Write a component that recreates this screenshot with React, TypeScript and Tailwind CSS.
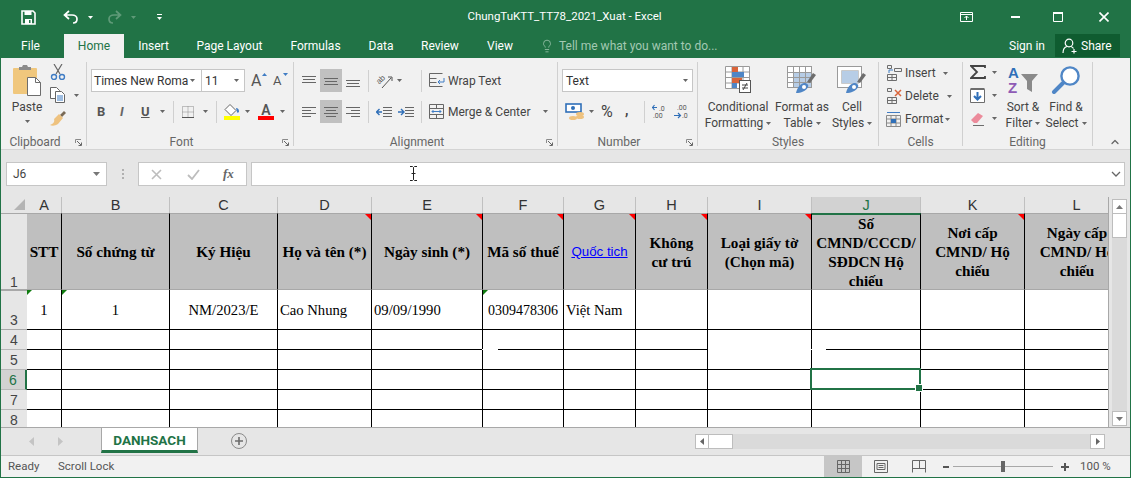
import type { ReactNode } from "react";
import { ChevronUp, Lightbulb } from "lucide-react";

const columns = [
  { name: "A", head: ["STT"] },
  { name: "B", head: ["Số chứng từ"] },
  { name: "C", head: ["Ký Hiệu"] },
  { name: "D", head: ["Họ và tên (*)"], note: true },
  { name: "E", head: ["Ngày sinh (*)"], note: true },
  { name: "F", head: ["Mã số thuế"], note: true },
  { name: "G", head: ["Quốc tich"], note: true, link: true },
  { name: "H", head: ["Không", "cư trú"], note: true },
  { name: "I", head: ["Loại giấy tờ", "(Chọn mã)"], note: true },
  { name: "J", head: ["Số", "CMND/CCCD/", "SĐDCN Hộ", "chiếu"] },
  { name: "K", head: ["Nơi cấp", "CMND/ Hộ", "chiếu"], note: true },
  { name: "L", head: ["Ngày cấp", "CMND/ Hộ", "chiếu"] },
];

const dataRow = [
  { text: "1", className: "justify-center", flag: true },
  { text: "1", className: "justify-center", flag: true },
  { text: "NM/2023/E", className: "justify-center" },
  { text: "Cao Nhung", className: "pl-[2px]" },
  { text: "09/09/1990", className: "pl-[2px]" },
  { text: "0309478306", className: "pl-[5px] pt-[2px] text-[14px]", flag: true },
  { text: "Việt Nam", className: "pl-[2px]" },
  { text: "" },
  { text: "" },
  { text: "" },
  { text: "" },
  { text: "" },
];

function Caret({ className = "" }: { className?: string }) {
  return (
    <svg width="5" height="3" viewBox="0 0 5 3" className={`shrink-0 ${className}`}>
      <path d="M0 0h5L2.5 3z" fill="#666" />
    </svg>
  );
}

function Launcher() {
  return (
    <svg width="7" height="7" viewBox="0 0 7 7" className="absolute right-[4px] top-[5px]">
      <path d="M.5 4V.5H6" fill="none" stroke="#8a8a8a" />
      <path d="M2 2l4 4M3.5 6.5h3v-3" fill="none" stroke="#666" />
    </svg>
  );
}

function Sep({ className = "" }: { className?: string }) {
  return <div className={`h-[22px] w-px shrink-0 bg-[#d0d0d0] ${className}`} />;
}

function Lines({ rows }: { rows: [number, number, number][] }) {
  return (
    <svg width="14" height="14" viewBox="0 0 14 14" className="shrink-0">
      {rows.map(([a, b, y]) => (
        <path key={`${a}-${y}`} d={`M${a} ${y + 0.5}H${b}`} stroke="#666" />
      ))}
    </svg>
  );
}

function Group({ width, label, launcher, children }: { width: string; label: string; launcher?: boolean; children: ReactNode }) {
  return (
    <div className={`${width} h-[84px] shrink-0 border-r border-[#d0d0d0] flex flex-col`}>
      <div className="h-[72px] relative">{children}</div>
      <div className={`relative h-[12px] text-center leading-[16px] text-[#666] ${launcher ? "pr-[17px]" : ""}`}>
        {label}
        {launcher && <Launcher />}
      </div>
    </div>
  );
}

function BrushCell({ tint }: { tint: "table" | "cell" }) {
  return (
    <svg width="30" height="28" viewBox="0 0 30 28">
      <rect x=".5" y=".5" width="24" height="21" fill="#fff" stroke="#9a9a9a" />
      {tint === "table" ? (
        <>
          <rect x="7" y="7" width="17" height="14" fill="#b7cde6" />
          <path d="M.5 6.5h24M.5 11.5h24M.5 16.5h24M6.5 1v20M12.5 1v20M18.5 1v20" stroke="#9a9a9a" />
        </>
      ) : (
        <>
          <rect x="5" y="5" width="16" height="12" fill="#b7cde6" />
          <path d="M4.5 4.5h17v13h-17z" fill="none" stroke="#c9c9c9" />
        </>
      )}
      <path d="M20 16l6-9 3 2-6 8z" fill="#6d6d6d" />
      <path d="M9 27c1-5 4-9 8-10 3 0 5 2 4 4-2 4-7 6-12 6z" fill="#4f86c6" />
      <circle cx="17" cy="21" r="2" fill="#fff" />
    </svg>
  );
}

function SmallGrid({ children }: { children?: ReactNode }) {
  return (
    <svg width="17" height="16" viewBox="0 0 17 16" className="shrink-0">
      <path d="M1.5 9.5h9v6h-9zM6 9.5v6M1.5 12.5h9" fill="none" stroke="#6d6d6d" />
      {children}
    </svg>
  );
}

function Ribbon() {
  return (
    <div className="h-[92px] pt-[4px] flex bg-[#f1f1f1] text-[12px] text-[#444] border-b border-[#d4d4d4]">
      <Group width="w-[86px]" label="Clipboard" launcher>
        <div className="flex">
          <div className="ml-[3px] w-[46px] flex flex-col items-center">
            <svg width="28" height="31" viewBox="0 0 28 31" className="mt-[3px]">
              <rect x="0" y="3" width="24" height="26" rx="1" fill="#f0c77d" />
              <path d="M6 5V2h3l1-2h4l1 2h3v3z" fill="#8b8b8b" />
              <path d="M14.5 12.5h8l5 5v13h-13z" fill="#fff" stroke="#6d6d6d" />
              <path d="M22.5 12.5v5h5" fill="none" stroke="#6d6d6d" />
            </svg>
            <div className="mt-[3px] leading-[16px]">Paste</div>
            <Caret className="mt-[5px]" />
          </div>
          <div className="mt-[2px] flex flex-col gap-[7px]">
            <svg width="16" height="16" viewBox="0 0 16 16">
              <path d="M4 0l6 10M12 0L6 10" stroke="#666" strokeWidth="1.2" />
              <circle cx="4" cy="13" r="2.5" fill="none" stroke="#3f7cc4" strokeWidth="1.4" />
              <circle cx="12" cy="13" r="2.5" fill="none" stroke="#3f7cc4" strokeWidth="1.4" />
            </svg>
            <div className="h-[16px] flex items-center">
              <svg width="16" height="16" viewBox="0 0 16 16">
                <path d="M.5.5h6l3 3v8h-9z" fill="#fff" stroke="#666" />
                <path d="M5.5 4.5h6l3 3v8h-9z" fill="#fff" stroke="#666" />
                <path d="M7 9h6M7 11h6M7 13h6" stroke="#3f7cc4" />
              </svg>
              <Caret className="ml-[8px]" />
            </div>
            <svg width="17" height="16" viewBox="0 0 17 16">
              <path d="M10 5l4-4 2 2-4 4z" fill="#7a6a55" />
              <path d="M9 4l4 4-5 6c-3 2-6 2-8 1 3-1 5-3 4-6z" fill="#eec27f" />
            </svg>
          </div>
        </div>
      </Group>

      <Group width="w-[207px]" label="Font" launcher>
        <div className="ml-[4px] mt-[7px] h-[23px] flex">
          <div className="w-[111px] bg-white border border-[#c6c6c6] flex items-center pl-[2px] pr-[4px]">
            <span className="w-[93px] whitespace-nowrap text-[#333]">Times New Roma</span>
            <Caret className="ml-[3px]" />
          </div>
          <div className="w-[43px] bg-white border border-[#c6c6c6] border-l-0 flex items-center pl-[3px] text-[#333]">
            <span className="w-[29px]">11</span>
            <Caret />
          </div>
          <div className="ml-[6px] w-[14px] relative text-[16px] leading-[23px] text-[#555]">
            A
            <svg width="5" height="3" viewBox="0 0 5 3" className="absolute right-[-2px] top-[4px]"><path d="M0 3h5L2.5 0z" fill="#3f7cc4" /></svg>
          </div>
          <div className="ml-[8px] w-[14px] relative text-[13px] leading-[24px] text-[#555]">
            A
            <svg width="5" height="3" viewBox="0 0 5 3" className="absolute right-[-1px] top-[4px]"><path d="M0 0h5L2.5 3z" fill="#3f7cc4" /></svg>
          </div>
        </div>
        <div className="mt-[8px] h-[23px] flex items-center text-[#555]">
          <span className="ml-[10px] w-[9px] font-bold text-[13px]">B</span>
          <span className="ml-[14px] w-[8px] italic font-bold text-[13px] text-[#666]">I</span>
          <span className="ml-[13px] w-[9px] underline font-bold text-[13px]">U</span>
          <Caret className="ml-[10px]" />
          <Sep className="ml-[8px]" />
          <svg width="12" height="12" viewBox="0 0 12 12" className="ml-[8px] shrink-0">
            <path d="M.5.5h11v11H.5zM6 .5v11M.5 6h11" fill="none" stroke="#8a8a8a" strokeDasharray="1 1" />
            <path d="M0 11.5h12" stroke="#555" />
          </svg>
          <Caret className="ml-[9px]" />
          <Sep className="ml-[8px]" />
          <div className="ml-[7px] w-[16px] shrink-0 flex flex-col items-center">
            <svg width="16" height="12" viewBox="0 0 16 12">
              <path d="M6 .5l6 6-5 5-6-6z" fill="#fff" stroke="#666" />
              <path d="M12 4c2 0 3 1 3 4-1 1-2 1-2 0z" fill="#3f7cc4" />
            </svg>
            <div className="h-[4px] w-[16px] bg-[#ffff00]" />
          </div>
          <Caret className="ml-[5px]" />
          <div className="ml-[8px] w-[16px] shrink-0 flex flex-col items-center">
            <span className="h-[12px] leading-[13px] text-[14px] font-semibold text-[#555]">A</span>
            <div className="h-[4px] w-[16px] bg-[#ff0000]" />
          </div>
          <Caret className="ml-[6px]" />
        </div>
      </Group>

      <Group width="w-[264px]" label="Alignment" launcher>
        <div className="mt-[7px] h-[23px] flex items-center">
          <div className="ml-[8px]"><Lines rows={[[0, 14, 2], [1, 13, 5], [0, 14, 8]]} /></div>
          <div className="ml-[4px] w-[22px] h-[23px] bg-[#c0c0c0] flex items-center justify-center"><Lines rows={[[0, 14, 4], [1, 13, 7], [0, 14, 10]]} /></div>
          <div className="ml-[4px]"><Lines rows={[[0, 14, 6], [1, 13, 9], [0, 14, 12]]} /></div>
          <Sep className="ml-[8px]" />
          <svg width="16" height="16" viewBox="0 0 16 16" className="ml-[7px] shrink-0 overflow-visible">
            <text x="1" y="10" fontSize="8" fill="#555" transform="rotate(-45 4 8)" fontFamily="Liberation Sans">ab</text>
            <path d="M6 15L15 5M12 4h4v4" fill="none" stroke="#555" />
          </svg>
          <Caret className="ml-[5px]" />
          <Sep className="ml-[19px]" />
          <svg width="16" height="15" viewBox="0 0 16 15" className="ml-[7px] shrink-0">
            <path d="M.5.5h13M.5 5.5h7M.5 9.5h7M.5 13.5h13M.5.5v13" fill="none" stroke="#666" />
            <path d="M15 5v4H9M11 7L9 9l2 2" fill="none" stroke="#3f7cc4" />
          </svg>
          <span className="ml-[3px]">Wrap Text</span>
        </div>
        <div className="mt-[8px] h-[23px] flex items-center">
          <div className="ml-[8px]"><Lines rows={[[0, 14, 2], [0, 9, 5], [0, 14, 8], [0, 9, 11]]} /></div>
          <div className="ml-[4px] w-[22px] h-[23px] bg-[#c0c0c0] flex items-center justify-center"><Lines rows={[[0, 14, 2], [2, 12, 5], [0, 14, 8], [2, 12, 11]]} /></div>
          <div className="ml-[4px]"><Lines rows={[[0, 14, 2], [5, 14, 5], [0, 14, 8], [5, 14, 11]]} /></div>
          <Sep className="ml-[8px]" />
          <svg width="16" height="12" viewBox="0 0 16 12" className="ml-[7px] shrink-0">
            <path d="M7 1.5h9M7 4.5h9M7 7.5h9M7 10.5h9" stroke="#666" />
            <path d="M6 6H1M3.5 3L.5 6l3 3" fill="none" stroke="#2f6fb8" strokeWidth="1.4" />
          </svg>
          <svg width="16" height="12" viewBox="0 0 16 12" className="ml-[6px] shrink-0">
            <path d="M7 1.5h9M7 4.5h9M7 7.5h9M7 10.5h9" stroke="#666" />
            <path d="M0 6h5M3 3l3 3-3 3" fill="none" stroke="#2f6fb8" strokeWidth="1.4" />
          </svg>
          <Sep className="ml-[7px]" />
          <svg width="16" height="15" viewBox="0 0 16 15" className="ml-[7px] shrink-0">
            <path d="M.5.5h14v14H.5zM.5 4.5h14M.5 10.5h14M7.5.5v4M7.5 10.5v4" fill="none" stroke="#666" />
            <path d="M3 7.5h9M4.5 6L3 7.5 4.5 9M10.5 6L12 7.5 10.5 9" fill="none" stroke="#3f7cc4" />
          </svg>
          <span className="ml-[3px] w-[86px] shrink-0 whitespace-nowrap">Merge &amp; Center</span>
          <Caret className="ml-[9px]" />
        </div>
      </Group>

      <Group width="w-[140px]" label="Number" launcher>
        <div className="ml-[4px] mt-[7px] w-[131px] h-[23px] bg-white border border-[#c6c6c6] flex items-center justify-between pl-[3px] pr-[4px] text-[#333]">
          <span>Text</span>
          <Caret />
        </div>
        <div className="mt-[8px] h-[23px] flex items-center">
          <svg width="20" height="18" viewBox="0 0 20 18" className="ml-[7px] shrink-0">
            <rect x="1" y="1" width="15" height="8" fill="#fff" stroke="#2f6fb8" strokeWidth="1.6" />
            <circle cx="8" cy="5" r="2" fill="#2f6fb8" />
            <ellipse cx="15" cy="11" rx="4" ry="2" fill="#eec27f" />
            <ellipse cx="15" cy="14" rx="4" ry="2" fill="#eec27f" />
            <ellipse cx="8" cy="15" rx="4" ry="2" fill="#eec27f" />
          </svg>
          <Caret className="ml-[4px]" />
          <span className="ml-[7px] w-[13px] text-[16px] leading-none">%</span>
          <span className="ml-[11px] w-[5px] font-bold text-[14px] leading-[10px] pb-[4px]">,</span>
          <Sep className="ml-[14px]" />
          <svg width="14" height="15" viewBox="0 0 14 15" className="ml-[7px] shrink-0">
            <path d="M5 3.5H0M2.5 1L.5 3.5 2.5 6" fill="none" stroke="#2f6fb8" strokeWidth="1.2" />
            <text x="7" y="7" fontSize="7" fill="#555">.0</text>
            <text x="1" y="14" fontSize="7" fill="#555">.00</text>
          </svg>
          <svg width="14" height="15" viewBox="0 0 14 15" className="ml-[8px] shrink-0">
            <text x="3" y="6" fontSize="7" fill="#555">.00</text>
            <path d="M0 11.5h6M4 9l2.5 2.5L4 14" fill="none" stroke="#2f6fb8" strokeWidth="1.2" />
            <text x="8" y="14" fontSize="7" fill="#555">.0</text>
          </svg>
        </div>
      </Group>

      <Group width="w-[181px]" label="Styles">
        <div className="flex leading-[16px]">
          <div className="ml-[5px] w-[70px] flex flex-col items-center whitespace-nowrap">
            <svg width="26" height="27" viewBox="0 0 26 27" className="mt-[4px]">
              <path d="M.5.5h24v22H.5zM.5 6h24M.5 11.5h24M.5 17h24M7 .5v22M18 .5v22" fill="#fff" stroke="#9a9a9a" />
              <rect x="7" y="1" width="6" height="5" fill="#d9643a" />
              <rect x="7" y="6" width="12" height="5" fill="#4f86c6" />
              <rect x="7" y="12" width="10" height="5" fill="#d9643a" />
              <rect x="7" y="17" width="5" height="5" fill="#4f86c6" />
              <rect x="14.5" y="14.5" width="11" height="12" fill="#fff" stroke="#555" />
              <path d="M17 19h6M17 22h6M22 17l-4 7" stroke="#444" />
            </svg>
            <div className="mt-[6px]">Conditional</div>
            <div className="flex items-center">Formatting<Caret className="ml-[3px]" /></div>
          </div>
          <div className="ml-[1px] w-[56px] flex flex-col items-center whitespace-nowrap">
            <div className="mt-[4px] h-[27px]"><BrushCell tint="table" /></div>
            <div className="mt-[6px]">Format as</div>
            <div className="flex items-center">Table<Caret className="ml-[3px]" /></div>
          </div>
          <div className="ml-[2px] w-[40px] flex flex-col items-center whitespace-nowrap">
            <div className="mt-[4px] h-[27px]"><BrushCell tint="cell" /></div>
            <div className="mt-[6px]">Cell</div>
            <div className="flex items-center">Styles<Caret className="ml-[3px]" /></div>
          </div>
        </div>
      </Group>

      <Group width="w-[84px]" label="Cells">
        <div className="mt-[3px] flex flex-col gap-[7px]">
          <div className="h-[16px] flex items-center">
            <div className="ml-[7px]">
              <SmallGrid>
                <path d="M1.5.5h4v3h-4zM8.5 3.5h7v3h-7z" fill="none" stroke="#6d6d6d" />
                <path d="M7 5H3v3" fill="none" stroke="#3f7cc4" />
              </SmallGrid>
            </div>
            <span className="ml-[2px] w-[38px]">Insert</span>
            <Caret />
          </div>
          <div className="h-[16px] flex items-center">
            <div className="ml-[7px]">
              <SmallGrid>
                <path d="M1.5.5h4v3h-4z" fill="none" stroke="#6d6d6d" />
                <path d="M9 2l6 6M15 2L9 8" stroke="#d9643a" strokeWidth="1.5" />
              </SmallGrid>
            </div>
            <span className="ml-[2px] w-[42px]">Delete</span>
            <Caret />
          </div>
          <div className="h-[16px] flex items-center">
            <svg width="15" height="16" viewBox="0 0 15 16" className="ml-[7px] shrink-0">
              <path d="M.5 4.5h14v11H.5zM.5 8h14M.5 12h14M5 4.5v11M10 4.5v11" fill="none" stroke="#8a8a8a" />
              <rect x="5" y="8" width="5" height="4" fill="#2f6fb8" />
              <path d="M1 1.5h13" stroke="#3f7cc4" />
            </svg>
            <span className="ml-[4px] w-[40px]">Format</span>
            <Caret />
          </div>
        </div>
      </Group>

      <Group width="w-[130px]" label="Editing">
        <div className="flex">
          <div className="mt-[2px] flex flex-col gap-[7px]">
            <div className="h-[16px] flex items-center">
              <svg width="16" height="14" viewBox="0 0 16 14" className="ml-[7px] shrink-0">
                <path d="M15 3V1H1l6 6-6 6h14v-2" fill="none" stroke="#444" strokeWidth="1.8" />
              </svg>
              <Caret className="ml-[6px]" />
            </div>
            <div className="h-[16px] flex items-center">
              <svg width="15" height="16" viewBox="0 0 15 16" className="ml-[7px] shrink-0">
                <path d="M.5 2.5h14v13H.5z" fill="#fff" stroke="#6d6d6d" />
                <path d="M.5 1h14v2H.5z" fill="#6d6d6d" />
                <path d="M7.5 5v7M4 9l3.5 3.5L11 9" fill="none" stroke="#2f6fb8" strokeWidth="2" />
              </svg>
              <Caret className="ml-[7px]" />
            </div>
            <div className="h-[16px] flex items-center">
              <svg width="15" height="15" viewBox="0 0 15 15" className="ml-[7px] shrink-0">
                <path d="M1 9l7-7 5 3-6 7H4z" fill="#ec8b9b" />
                <path d="M3 14.5h11" stroke="#6d6d6d" />
              </svg>
              <Caret className="ml-[7px]" />
            </div>
          </div>
          <div className="ml-[6px] w-[40px] flex flex-col items-center whitespace-nowrap leading-[16px]">
            <svg width="31" height="28" viewBox="0 0 31 28" className="mt-[4px] overflow-visible">
              <text x="0" y="12" fontSize="15" fontWeight="700" fill="#2f6fb8" fontFamily="Liberation Sans">A</text>
              <text x="0" y="27" fontSize="15" fontWeight="700" fill="#8f5bb5" fontFamily="Liberation Sans">Z</text>
              <path d="M13 8h17l-6 7v11l-5-3v-8z" fill="#8a8a8a" />
            </svg>
            <div className="mt-[5px]">Sort &amp;</div>
            <div className="flex items-center">Filter<Caret className="ml-[3px]" /></div>
          </div>
          <div className="ml-[3px] w-[40px] flex flex-col items-center whitespace-nowrap leading-[16px]">
            <svg width="30" height="28" viewBox="0 0 30 28" className="mt-[4px]">
              <circle cx="19" cy="10" r="8.6" fill="#fff" stroke="#4f86c6" strokeWidth="2.4" />
              <path d="M12 17l-9 9" stroke="#4f86c6" strokeWidth="4" strokeLinecap="round" />
            </svg>
            <div className="mt-[5px]">Find &amp;</div>
            <div className="flex items-center">Select<Caret className="ml-[3px]" /></div>
          </div>
        </div>
      </Group>

      <ChevronUp size={12} strokeWidth={2.5} color="#666" className="self-end ml-[16px] mb-[1px]" />
    </div>
  );
}

function FormulaBar() {
  return (
    <div className="h-[47px] pt-[12px] flex bg-[#e6e6e6] text-[12px] text-[#444]">
      <div className="ml-[5px] w-[101px] h-[24px] bg-white border border-[#c6c6c6] flex items-center justify-between pl-[6px] pr-[6px]">
        <span>J6</span>
        <svg width="7" height="4" viewBox="0 0 7 4"><path d="M0 0h7L3.5 4z" fill="#777" /></svg>
      </div>
      <div className="ml-[15px] h-[24px] flex flex-col justify-center gap-[2px]">
        <div className="w-[2px] h-[2px] bg-[#b0b0b0]" />
        <div className="w-[2px] h-[2px] bg-[#b0b0b0]" />
        <div className="w-[2px] h-[2px] bg-[#b0b0b0]" />
      </div>
      <div className="ml-[14px] w-[109px] h-[24px] bg-white border border-[#c6c6c6] flex items-center">
        <svg width="11" height="11" viewBox="0 0 11 11" className="ml-[12px]"><path d="M1 1l9 9M10 1l-9 9" stroke="#bdbdbd" strokeWidth="1.6" /></svg>
        <svg width="13" height="11" viewBox="0 0 13 11" className="ml-[25px]"><path d="M1 6l4 4 7-9" fill="none" stroke="#bdbdbd" strokeWidth="1.8" /></svg>
        <span className="ml-[23px] font-['Liberation_Serif',serif] italic font-bold text-[13px] text-[#666]">fx</span>
      </div>
      <div className="relative ml-[4px] flex-1 mr-[5px] h-[24px] bg-white border border-[#c6c6c6] flex items-center justify-end pr-[3px]">
        <svg width="10" height="6" viewBox="0 0 10 6"><path d="M1 1l4 4 4-4" fill="none" stroke="#666" strokeWidth="1.3" /></svg>
        <svg width="7" height="15" viewBox="0 0 7 15" className="absolute left-[158px] top-[3px]">
          <path d="M0 .5h2.5l1 1 1-1H7M0 14.5h2.5l1-1 1 1H7M3.5 1.5v12M1.5 7.5h4" fill="none" stroke="#222" />
        </svg>
      </div>
    </div>
  );
}

function Sheet() {
  return (
    <div className="h-[230px] flex bg-[#e6e6e6]">
      <div className="w-[1108px] shrink-0 overflow-hidden border-r border-[#a8a8a8]">
        <div className="w-[1228px] grid grid-cols-[26px_35px_108px_108px_94px_111px_81px_72px_72px_104px_109px_104px_104px] grid-rows-[16px_77px_40px_repeat(5,20px)] font-['Liberation_Serif',serif] text-[14.67px] text-black">
          <div className="bg-[#e6e6e6] flex items-end justify-end pr-[2px] pb-[3px]">
            <svg width="11" height="11" viewBox="0 0 11 11"><path d="M11 0v11H0z" fill="#b4b4b4" /></svg>
          </div>
          {columns.map((c) => (
            <div
              key={c.name}
              className={`border-r border-[#c0c0c0] flex items-center justify-center font-['Liberation_Sans',sans-serif] text-[14.5px] leading-none ${c.name === "J" ? "bg-[#d2d2d2] text-[#217346]" : "bg-[#e6e6e6] text-[#333]"}`}
            >
              {c.name}
            </div>
          ))}

          <div className="bg-[#e6e6e6] border-y border-[#a8a8a8] flex items-end justify-center leading-none font-['Liberation_Sans',sans-serif] text-[14px] text-[#444]">1</div>
          {columns.map((c) => (
            <div
              key={c.name}
              className={`relative bg-[#bfbfbf] border-r border-r-black border-b border-b-[#a8a8a8] flex flex-col items-center justify-center whitespace-nowrap leading-[19px] ${c.name === "J" ? "border-t-2 border-t-[#217346]" : "border-t border-t-[#a8a8a8]"} ${c.name === "L" ? "border-r-0" : ""}`}
            >
              {c.link ? (
                <span className="font-['Liberation_Sans',sans-serif] text-[13.3px] font-normal text-[#0000ff] underline">{c.head[0]}</span>
              ) : (
                c.head.map((line) => <span key={line} className="font-bold text-[15.2px]">{line}</span>)
              )}
              {c.note && <div className="absolute right-0 top-0 w-[6px] h-[6px] bg-[#ff0000] [clip-path:polygon(0_0,100%_0,100%_100%)]" />}
            </div>
          ))}

          <div className="bg-[#e6e6e6] border-y border-[#a8a8a8] flex items-end justify-center leading-none pb-[2px] font-['Liberation_Sans',sans-serif] text-[14px] text-[#444]">3</div>
          {dataRow.map((d, i) => (
            <div key={i} className={`relative bg-white border-r border-b border-black flex items-center whitespace-nowrap ${d.className ?? ""}`}>
              {d.text}
              {d.flag && <div className="absolute left-0 top-0 w-[5px] h-[5px] bg-[#107c10] [clip-path:polygon(0_0,100%_0,0_100%)]" />}
            </div>
          ))}

          {[4, 5, 6, 7, 8].map((row) => (
            <Row key={row} row={row} />
          ))}
        </div>
      </div>
      <div className="w-[21px] pl-[3px] pt-[2px] flex flex-col">
        <div className="w-[15px] h-[15px] bg-white border border-[#bdbdbd] flex items-center justify-center">
          <svg width="7" height="4" viewBox="0 0 7 4"><path d="M0 4h7L3.5 0z" fill="#777" /></svg>
        </div>
        <div className="w-[15px] flex-1 bg-[#dadada] flex flex-col">
          <div className="h-[24px] bg-white border-x border-b border-[#bdbdbd]" />
        </div>
        <div className="w-[15px] h-[15px] bg-white border border-[#bdbdbd] flex items-center justify-center">
          <svg width="7" height="4" viewBox="0 0 7 4"><path d="M0 0h7L3.5 4z" fill="#777" /></svg>
        </div>
        <div className="h-[1px]" />
      </div>
    </div>
  );
}

function Row({ row }: { row: number }) {
  const selected = row === 6;
  return (
    <>
      <div
        className={`border-b border-[#b8b8b8] flex items-center justify-center font-['Liberation_Sans',sans-serif] text-[14px] leading-none ${selected ? "bg-[#d2d2d2] text-[#217346] border-r-2 border-r-[#217346]" : "bg-[#e6e6e6] text-[#444]"}`}
      >
        {row}
      </div>
      {columns.map((c) => (
        <div
          key={c.name}
          className={`relative bg-white border-r border-black ${row === 4 && c.name === "I" ? "" : "border-b"}`}
        >
          {row === 4 && c.name === "F" && <div className="absolute left-[-1px] bottom-[-1px] w-[16px] h-px bg-white" />}
          {row === 4 && c.name === "J" && <div className="absolute left-[-1px] bottom-[-1px] w-[15px] h-px bg-white" />}
          {selected && c.name === "J" && (
            <div className="absolute z-10 left-[-2px] right-[-1px] top-[-2px] bottom-[-1px] border-2 border-[#217346]">
              <div className="absolute right-[-4px] bottom-[-4px] w-[6px] h-[6px] bg-[#217346] border border-white box-content" />
            </div>
          )}
        </div>
      ))}
    </>
  );
}

function Tabs() {
  return (
    <div className="h-[29px] flex bg-[#e6e6e6] border-t border-[#a8a8a8] border-b border-b-[#c6c6c6]">
      <svg width="5" height="9" viewBox="0 0 5 9" className="ml-[28px] mt-[9px]"><path d="M5 0v9L0 4.5z" fill="#c4c4c4" /></svg>
      <svg width="5" height="9" viewBox="0 0 5 9" className="ml-[24px] mt-[9px]"><path d="M0 0v9l5-4.5z" fill="#c4c4c4" /></svg>
      <div className="ml-[38px] w-[97px] h-[25px] pt-[2px] bg-white border-x border-[#a8a8a8] border-b-[3px] border-b-[#217346] flex items-center justify-center text-[13.5px] font-bold text-[#217346]">
        DANHSACH
      </div>
      <svg width="16" height="16" viewBox="0 0 16 16" className="ml-[33px] mt-[5px]">
        <circle cx="8" cy="8" r="7.5" fill="none" stroke="#8a8a8a" />
        <path d="M8 4v8M4 8h8" stroke="#6d6d6d" strokeWidth="1.6" />
      </svg>
      <div className="ml-[448px] mt-[6px] w-[410px] h-[15px] bg-[#dadada] flex">
        <div className="w-[14px] h-[15px] bg-white border border-[#bdbdbd] flex items-center justify-center">
          <svg width="4" height="7" viewBox="0 0 4 7"><path d="M4 0v7L0 3.5z" fill="#666" /></svg>
        </div>
        <div className="w-[24px] h-[15px] bg-white border-y border-r border-[#bdbdbd]" />
        <div className="ml-auto w-[15px] h-[15px] bg-white border border-[#bdbdbd] flex items-center justify-center">
          <svg width="4" height="7" viewBox="0 0 4 7"><path d="M0 0v7l4-3.5z" fill="#666" /></svg>
        </div>
      </div>
    </div>
  );
}

function StatusBar() {
  return (
    <div className="h-[21px] flex items-center bg-[#f1f1f1] text-[11.5px] text-[#555]">
      <span className="ml-[7px] w-[50px]">Ready</span>
      <span className="w-[766px] whitespace-nowrap">Scroll Lock</span>
      <div className="w-[38px] h-[21px] bg-[#c6c6c6] flex items-center justify-center">
        <svg width="13" height="13" viewBox="0 0 13 13"><path d="M.5.5h12v12H.5zM4.5.5v12M8.5.5v12M.5 4.5h12M.5 8.5h12" fill="none" stroke="#666" /></svg>
      </div>
      <svg width="14" height="13" viewBox="0 0 14 13" className="ml-[12px]"><path d="M.5.5h13v12H.5z" fill="none" stroke="#666" /><path d="M3 3.5h8v6H3zM4.5 5.5h5M4.5 7.5h5" fill="none" stroke="#666" /></svg>
      <svg width="14" height="13" viewBox="0 0 14 13" className="ml-[24px]"><path d="M.5 12.5V.5h13v12M.5 8.5h13M7.5.5v8" fill="none" stroke="#666" /></svg>
      <div className="ml-[17px] w-[6px] h-[2px] bg-[#555]" />
      <div className="ml-[4px] w-[100px] h-px bg-[#a8a8a8] relative">
        <div className="absolute left-[48px] top-[-5px] w-[4px] h-[11px] bg-[#666]" />
      </div>
      <svg width="8" height="8" viewBox="0 0 8 8" className="ml-[8px]"><path d="M4 0v8M0 4h8" stroke="#555" strokeWidth="2" /></svg>
      <span className="ml-[11px] whitespace-nowrap">100 %</span>
    </div>
  );
}

export default function App() {
  return (
    <div className="w-[1131px] h-[478px] overflow-hidden flex flex-col border-x border-b border-[#217346] bg-[#f1f1f1] font-['Roboto',sans-serif]">
      <div className="h-[34px] flex items-center bg-[#217346] text-white">
        <div className="w-[200px] flex items-center">
          <svg width="15" height="15" viewBox="0 0 15 15" className="ml-[20px]">
            <path d="M1 1h11l2 2v11H1z" fill="none" stroke="#fff" strokeWidth="1.6" />
            <path d="M3.5 1v4h7V1zM4 14V9h7v5" fill="#fff" />
            <rect x="8" y="10" width="1.5" height="3" fill="#217346" />
          </svg>
          <svg width="16" height="14" viewBox="0 0 16 14" className="ml-[27px]">
            <path d="M6 1L1.5 5 6 9M2 5h7c3 0 5 2 5 4s-1 4-4 4" fill="none" stroke="#fff" strokeWidth="1.7" />
          </svg>
          <svg width="5" height="3" viewBox="0 0 5 3" className="ml-[9px]"><path d="M0 0h5L2.5 3z" fill="#fff" /></svg>
          <svg width="15" height="14" viewBox="0 0 15 14" className="ml-[14px]">
            <path d="M9 1l4.5 4L9 9M13 5H7c-3 0-5 2-5 4s1 4 4 4" fill="none" stroke="#5f9a78" strokeWidth="1.7" />
          </svg>
          <svg width="5" height="3" viewBox="0 0 5 3" className="ml-[9px]"><path d="M0 0h5L2.5 3z" fill="#5f9a78" /></svg>
          <svg width="5" height="6" viewBox="0 0 5 6" className="ml-[21px]"><path d="M0 .5h5" stroke="#fff" /><path d="M0 3h5L2.5 6z" fill="#fff" /></svg>
        </div>
        <div className="flex-1 text-center text-[11.5px]">ChungTuKTT_TT78_2021_Xuat - Excel</div>
        <div className="w-[202px] flex items-center">
          <svg width="13" height="10" viewBox="0 0 13 10" className="ml-[32px]">
            <path d="M.5.5h12v9H.5zM.5 2.5h12" fill="none" stroke="#fff" />
            <path d="M6.5 8V4M4.5 6l2-2 2 2" fill="none" stroke="#fff" />
          </svg>
          <div className="ml-[38px] w-[9px] h-[2px] bg-white" />
          <svg width="10" height="10" viewBox="0 0 10 10" className="ml-[33px]"><path d="M.5.5h9v9h-9z" fill="none" stroke="#fff" /><path d="M0 1h10" stroke="#fff" strokeWidth="2" /></svg>
          <svg width="10" height="10" viewBox="0 0 10 10" className="ml-[36px]"><path d="M.5.5l9 9M9.5.5l-9 9" stroke="#fff" strokeWidth="1.6" /></svg>
        </div>
      </div>

      <div className="h-[24px] flex bg-[#217346] text-[12px] text-white">
        <div className="w-[63px] text-center leading-[25px] pr-[4px]">File</div>
        <div className="w-[60px] bg-[#f1f1f1] text-[#217346] text-center leading-[24px]">Home</div>
        <div className="w-[59px] text-center leading-[24px]">Insert</div>
        <div className="w-[93px] text-center leading-[24px]">Page Layout</div>
        <div className="w-[79px] text-center leading-[24px]">Formulas</div>
        <div className="w-[52px] text-center leading-[24px]">Data</div>
        <div className="w-[66px] text-center leading-[24px]">Review</div>
        <div className="w-[54px] text-center leading-[24px]">View</div>
        <div className="ml-[13px] flex items-center text-[#a3c9b3]">
          <Lightbulb size={14} strokeWidth={1.3} />
          <span className="ml-[5px] w-[160px] whitespace-nowrap">Tell me what you want to do...</span>
        </div>
        <span className="ml-[290px] w-[36px] leading-[24px] whitespace-nowrap">Sign in</span>
        <div className="ml-[10px] w-[65px] h-[23px] bg-[#0f5c30] flex items-center">
          <svg width="16" height="16" viewBox="0 0 16 16" className="ml-[7px]">
            <circle cx="7" cy="5" r="3.8" fill="none" stroke="#fff" strokeWidth="1.2" />
            <path d="M1 15c0-4 2-6 4-6.5M9 8.5c1 .3 2 1 2.5 2M12 11v4.5M9.5 13.5h5" fill="none" stroke="#fff" strokeWidth="1.2" />
          </svg>
          <span className="ml-[3px]">Share</span>
        </div>
      </div>

      <Ribbon />
      <FormulaBar />
      <Sheet />
      <Tabs />
      <StatusBar />
    </div>
  );
}
